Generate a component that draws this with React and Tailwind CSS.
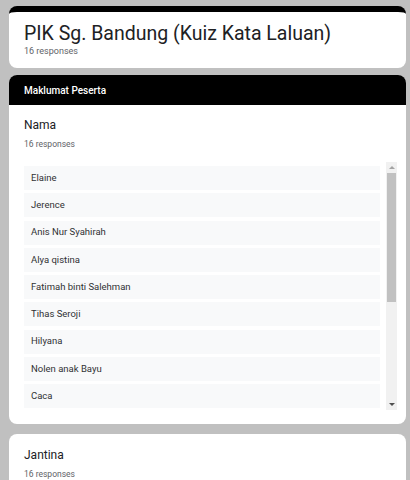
// App.jsx — form responses summary
const names = [
  'Elaine',
  'Jerence',
  'Anis Nur Syahirah',
  'Alya qistina',
  'Fatimah binti Salehman',
  'Tihas Seroji',
  'Hilyana',
  'Nolen anak Bayu',
  'Caca',
];

function Scrollbar() {
  return (
    <div className="w-[11px] h-[248px] bg-[#f1f1f1] flex flex-col items-center">
      <div className="h-[11px] w-full flex items-center justify-center">
        <div className="w-0 h-0 border-l-[3px] border-r-[3px] border-b-[3px] border-l-transparent border-r-transparent border-b-[#a3a3a3]" />
      </div>
      <div className="w-[9px] h-[129px] bg-[#c1c1c1]" />
      <div className="flex-1" />
      <div className="h-[11px] w-full flex items-center justify-center">
        <div className="w-0 h-0 border-l-[3px] border-r-[3px] border-t-[3px] border-l-transparent border-r-transparent border-t-[#505050]" />
      </div>
    </div>
  );
}

export default function App() {
  return (
    <div
      className="w-[410px] h-[480px] overflow-hidden bg-[#c0c0c0] pt-[6px] pl-[9px] pr-[4px]"
      style={{ fontFamily: 'Roboto, "Liberation Sans", sans-serif' }}
    >
      {/* Title card */}
      <div className="h-[62px] bg-white rounded-lg border-t-[6px] border-black px-[15px] pt-[10px]">
        <div className="text-[19.5px] leading-[24px] text-[#202124]">PIK Sg. Bandung (Kuiz Kata Laluan)</div>
        <div className="text-[9px] leading-[11px] text-[#5f6368]">16 responses</div>
      </div>

      {/* Section: Maklumat Peserta */}
      <div className="mt-[7px] h-[349px] bg-white rounded-lg overflow-hidden">
        <div className="h-[30px] bg-black text-white text-[10px] font-medium px-[15px] flex items-center">
          Maklumat Peserta
        </div>
        <div className="pl-[15px] pr-[8px] pt-[12px]">
          <div className="text-[12px] leading-[16px] text-[#202124]">Nama</div>
          <div className="mt-[6px] text-[8.5px] leading-[10px] text-[#5f6368]">16 responses</div>
          <div className="mt-[13px] flex">
            <div className="w-[356px] shrink-0 h-[248px] overflow-hidden pt-[4px] flex flex-col gap-[3.25px]">
              {names.map((n) => (
                <div key={n} className="h-[24px] shrink-0 bg-[#f8f9fa] px-[7px] flex items-center text-[9.5px] text-[#303134]">
                  {n}
                </div>
              ))}
            </div>
            <div className="ml-[6px]">
              <Scrollbar />
            </div>
          </div>
        </div>
      </div>

      {/* Section: Jantina */}
      <div className="mt-[10px] h-[60px] bg-white rounded-t-lg px-[15px] pt-[13px]">
        <div className="text-[12px] leading-[16px] text-[#202124]">Jantina</div>
        <div className="mt-[6px] text-[8.5px] leading-[10px] text-[#5f6368]">16 responses</div>
      </div>
    </div>
  );
}
